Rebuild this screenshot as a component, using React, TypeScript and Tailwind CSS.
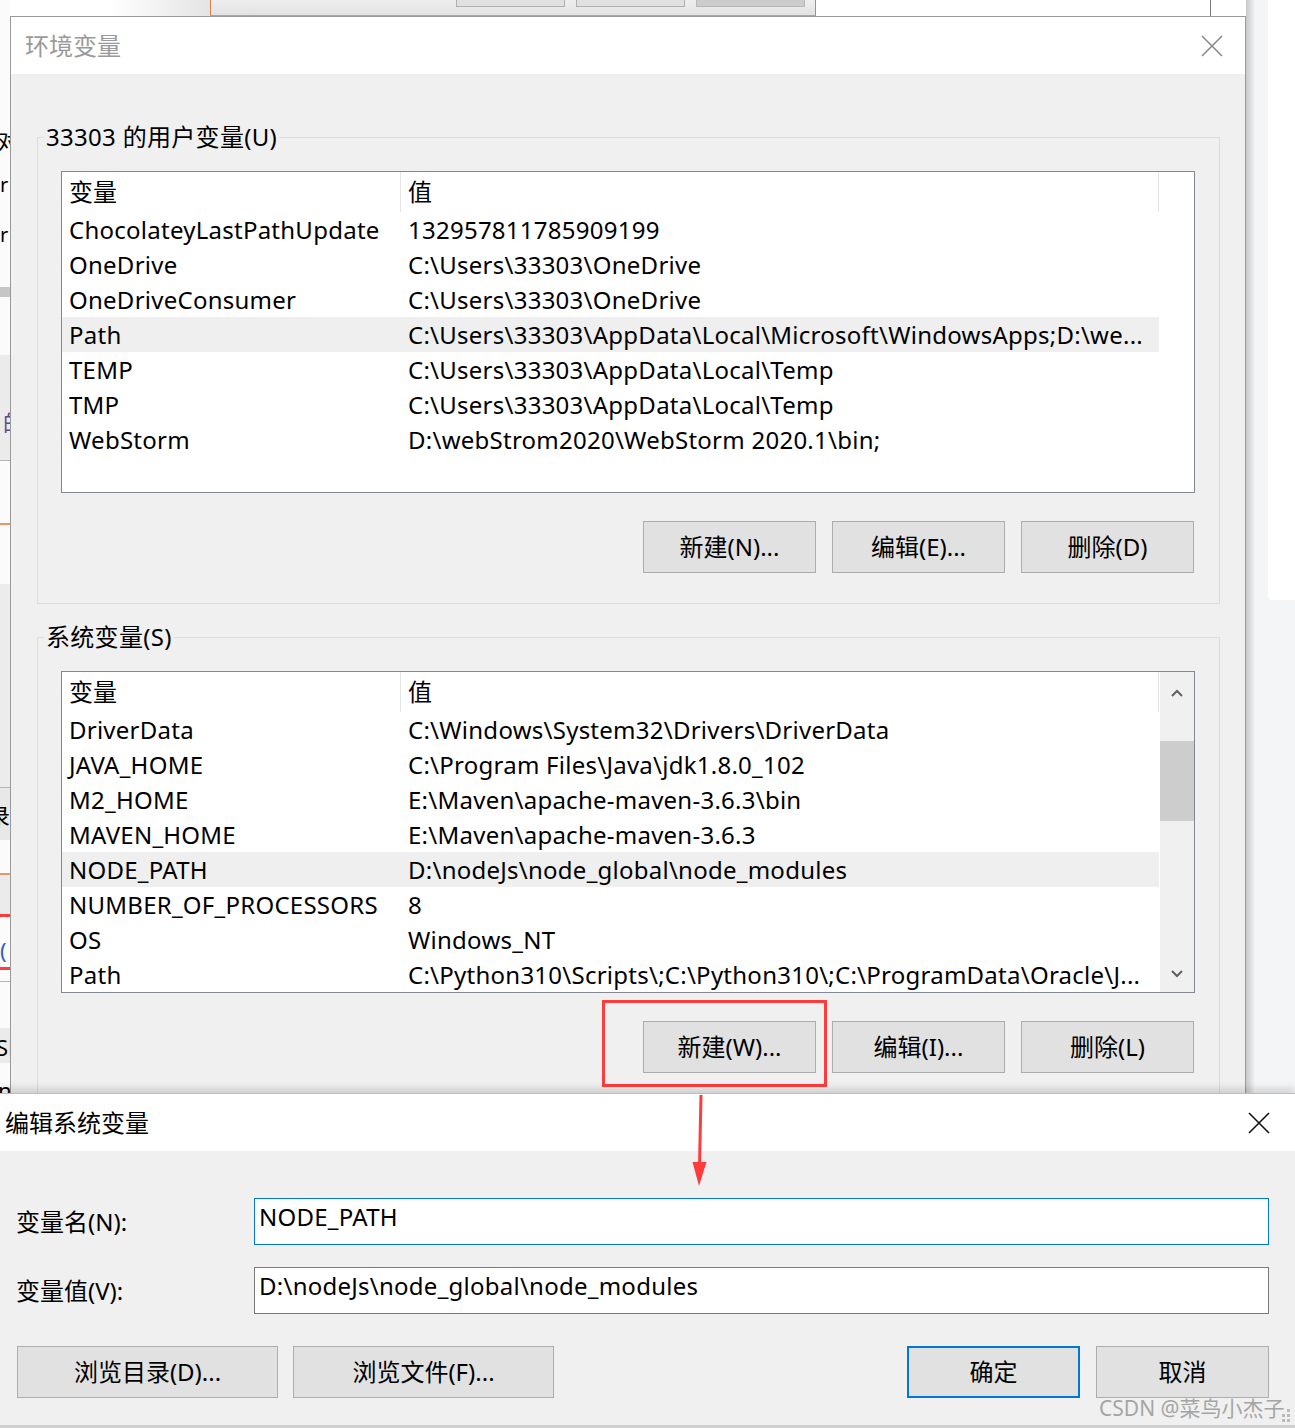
const FONT = "font-['Noto_Sans','Noto_Sans_CJK_SC',sans-serif]";

type Row = { name: string; value: string; active?: boolean };

const userVars: Row[] = [
  { name: "ChocolateyLastPathUpdate", value: "132957811785909199" },
  { name: "OneDrive", value: "C:\\Users\\33303\\OneDrive" },
  { name: "OneDriveConsumer", value: "C:\\Users\\33303\\OneDrive" },
  { name: "Path", value: "C:\\Users\\33303\\AppData\\Local\\Microsoft\\WindowsApps;D:\\we...", active: true },
  { name: "TEMP", value: "C:\\Users\\33303\\AppData\\Local\\Temp" },
  { name: "TMP", value: "C:\\Users\\33303\\AppData\\Local\\Temp" },
  { name: "WebStorm", value: "D:\\webStrom2020\\WebStorm 2020.1\\bin;" },
];

const sysVars: Row[] = [
  { name: "DriverData", value: "C:\\Windows\\System32\\Drivers\\DriverData" },
  { name: "JAVA_HOME", value: "C:\\Program Files\\Java\\jdk1.8.0_102" },
  { name: "M2_HOME", value: "E:\\Maven\\apache-maven-3.6.3\\bin" },
  { name: "MAVEN_HOME", value: "E:\\Maven\\apache-maven-3.6.3" },
  { name: "NODE_PATH", value: "D:\\nodeJs\\node_global\\node_modules", active: true },
  { name: "NUMBER_OF_PROCESSORS", value: "8" },
  { name: "OS", value: "Windows_NT" },
  { name: "Path", value: "C:\\Python310\\Scripts\\;C:\\Python310\\;C:\\ProgramData\\Oracle\\J..." },
];

// Close glyph of the title bars
const CloseIcon = ({ color }: { color: string }) => (
  <svg width="22" height="22" viewBox="0 0 22 22">
    <path d="M1 1 L21 21 M21 1 L1 21" stroke={color} strokeWidth="1.6" fill="none" />
  </svg>
);

const Chevron = ({ up }: { up?: boolean }) => (
  <svg width="12" height="8" viewBox="0 0 12 8">
    <path d={up ? "M1 7 L6 2 L11 7" : "M1 1 L6 6 L11 1"} stroke="#606060" strokeWidth="2" fill="none" />
  </svg>
);

const WinButton = ({ label, wide, primary }: { label: string; wide?: boolean; primary?: boolean }) => (
  <div
    className={`flex items-center justify-center h-[52px] bg-[#e1e1e1] text-[24px] text-black ${
      wide ? "w-[261px]" : "w-[173px]"
    } ${primary ? "border-2 border-[#0078d7]" : "border border-[#adadad]"}`}
  >
    {label}
  </div>
);

const VarList = ({ rows, scroll }: { rows: Row[]; scroll?: boolean }) => (
  <div className="flex h-[322px] w-[1134px] border border-[#828790] bg-white overflow-hidden">
    <div className="flex w-[1097px] flex-col">
      {/* header */}
      <div className="flex h-[40px] shrink-0 text-[24px] leading-[40px]">
        <div className="w-[339px] border-r border-[#e5e5e5] pl-[7px]">变量</div>
        <div className="flex-1 border-r border-[#e5e5e5] pl-[7px]">值</div>
      </div>
      {rows.map((r) => (
        <div
          key={r.name}
          className={`flex h-[35px] shrink-0 text-[24px] leading-[35px] tracking-[0.25px] whitespace-nowrap ${
            r.active ? "bg-[#efefef]" : ""
          }`}
        >
          <div className="w-[339px] pl-[7px]">{r.name}</div>
          <div className="flex-1 pl-[7px]">{r.value}</div>
        </div>
      ))}
    </div>
    <div className="flex w-[35px] pl-px">
      {scroll && (
        <div className="flex w-[34px] flex-col items-center bg-[#f0f0f0]">
          <div className="flex h-[40px] items-center justify-center pt-[2px]">
            <Chevron up />
          </div>
          <div className="mt-[29px] h-[80px] w-full bg-[#cdcdcd]" />
          <div className="flex-1" />
          <div className="flex h-[36px] items-center justify-center">
            <Chevron />
          </div>
        </div>
      )}
    </div>
  </div>
);

const Group = ({ title, rows, scroll, keys }: { title: string; rows: Row[]; scroll?: boolean; keys: string[] }) => (
  <fieldset className="border border-[#dcdcdc] p-0 m-0 min-w-0">
    <legend className="ml-[6px] px-[2px] text-[24px] leading-[32px] tracking-[0.3px]">{title}</legend>
    <div className="flex flex-col pl-[23px] pr-[24px] pt-[18px] pb-[30px]">
      <VarList rows={rows} scroll={scroll} />
      <div className="mt-[28px] flex justify-end gap-[16px] pr-px">
        <WinButton label={`新建(${keys[0]})...`} />
        <WinButton label={`编辑(${keys[1]})...`} />
        <WinButton label={`删除(${keys[2]})`} />
      </div>
    </div>
  </fieldset>
);

// strip of a window lying behind, at the left edge
const LeftStrip = () => (
  <div className="flex w-[10px] shrink-0 flex-col overflow-hidden bg-[#fbfbfb] text-[22px] leading-[30px]">
    <div className="h-[125px]" />
    <div className="-ml-[3px] h-[35px]">对</div>
    <div className="h-[50px] pt-[10px] text-[20px]">r</div>
    <div className="h-[50px] pt-[10px] text-[20px]">r</div>
    <div className="h-[27px]" />
    <div className="h-[10px] bg-[#c6c6c6]" />
    <div className="h-[58px]" />
    <div className="h-[105px] bg-[#ebebeb] pl-[3px] pt-[52px] text-[#5a4a8a]">的</div>
    <div className="h-px bg-[#b5b5b5]" />
    <div className="h-[62px]" />
    <div className="h-[2px] bg-[#e8956a]" />
    <div className="h-[59px]" />
    <div className="h-[203px] bg-[#ececec]" />
    <div className="h-px bg-[#b5b5b5]" />
    <div className="h-[52px] bg-[#e8e8e8] pt-[12px]">
      <div className="-ml-[12px]">录</div>
    </div>
    <div className="h-[33px]" />
    <div className="h-[2px] bg-[#e8956a]" />
    <div className="h-[39px] bg-[#ebebeb]" />
    <div className="h-[3px] bg-[#ff3b3b]" />
    <div className="h-[50px] pt-[18px] text-[#3060c0]">(</div>
    <div className="h-[3px] bg-[#ff3b3b]" />
    <div className="h-[11px]" />
    <div className="h-px bg-[#b5b5b5]" />
    <div className="h-[46px]" />
    <div className="h-[35px] bg-[#ebebeb] pt-[4px]">
      <div className="-ml-[4px]">SF</div>
    </div>
    <div className="h-[12px]" />
    <div className="-ml-[2px] h-[18px]">n</div>
  </div>
);

const RightStrip = () => (
  <div className="flex w-[49px] shrink-0">
    <div className="w-[9px] bg-gradient-to-r from-[#c8c8c8] to-[#f4f5f7]" />
    <div className="w-[13px] bg-[#f4f5f7]" />
    <div className="flex w-[27px] flex-col bg-[#f4f5f7]">
      <div className="h-[600px] rounded-bl-[4px] bg-white" />
    </div>
  </div>
);

const BackWindowStrip = () => (
  <div className="flex h-[16px] shrink-0">
    <div className="w-[200px] bg-gradient-to-r from-white via-white to-[#e4e4e4]" />
    <div className="flex w-[606px] border-x border-b border-x-[#e07a48] border-b-[#a8a8a8] bg-gradient-to-b from-[#efefef] to-[#e2e2e2] pl-[245px]">
      <div className="flex h-[7px] gap-[11px]">
        <div className="w-[109px] border border-t-0 border-[#b0b0b0] bg-[#e1e1e1]" />
        <div className="w-[109px] border border-t-0 border-[#b0b0b0] bg-[#e1e1e1]" />
        <div className="w-[109px] border border-t-0 border-[#b8b8b8] bg-[#cccccc]" />
      </div>
    </div>
    <div className="flex flex-1 bg-white pl-[394px]">
      <div className="w-px bg-[#7a7a7a]" />
    </div>
  </div>
);

export default function App() {
  return (
    <div className={`relative flex h-[1428px] w-[1295px] flex-col overflow-hidden bg-white text-black ${FONT}`}>
      <div className="flex h-[1093px] shrink-0">
        <LeftStrip />
        <div className="flex w-[1236px] shrink-0 flex-col">
          <BackWindowStrip />
          {/* 环境变量 dialog */}
          <div className="flex flex-1 flex-col overflow-hidden border-l border-r border-t border-[#9a9a9a]">
            <div className="flex h-[57px] shrink-0 items-center justify-between bg-white pl-[14px] pr-[22px]">
              <span className="text-[24px] text-[#9a9a9a]">环境变量</span>
              <CloseIcon color="#8a8a8a" />
            </div>
            <div className="flex flex-1 flex-col bg-[#f0f0f0] pl-[26px] pr-[25px] pt-[47px]">
              <Group title="33303 的用户变量(U)" rows={userVars} keys={["N", "E", "D"]} />
              <div className="h-[17px] shrink-0" />
              <Group title="系统变量(S)" rows={sysVars} scroll keys={["W", "I", "L"]} />
            </div>
          </div>
        </div>
        <RightStrip />
      </div>

      {/* 编辑系统变量 dialog */}
      <div className="relative z-10 flex flex-1 flex-col border-t border-[#bdbdbd] shadow-[0_-5px_7px_rgba(0,0,0,0.13)]">
        <div className="flex h-[57px] shrink-0 items-center justify-between bg-white pl-[5px] pr-[25px]">
          <span className="text-[24px]">编辑系统变量</span>
          <CloseIcon color="#111111" />
        </div>
        <div className="flex flex-1 flex-col bg-[#f0f0f0] pt-[47px]">
          <div className="flex items-center pl-[16px]">
            <div className="w-[238px] text-[24px]">变量名(N):</div>
            <div className="h-[47px] w-[1015px] border border-[#0078d7] bg-white pl-[4px] pt-[2px] text-[24px] leading-[32px] tracking-[0.25px]">
              NODE_PATH
            </div>
          </div>
          <div className="mt-[22px] flex items-center pl-[16px]">
            <div className="w-[238px] text-[24px]">变量值(V):</div>
            <div className="h-[47px] w-[1015px] border border-[#7a7a7a] bg-white pl-[4px] pt-[2px] text-[24px] leading-[32px] tracking-[0.25px]">
              D:\nodeJs\node_global\node_modules
            </div>
          </div>
          <div className="mt-[32px] flex justify-between pl-[17px] pr-[26px]">
            <div className="flex gap-[15px]">
              <WinButton label="浏览目录(D)..." wide />
              <WinButton label="浏览文件(F)..." wide />
            </div>
            <div className="flex gap-[16px]">
              <WinButton label="确定" primary />
              <WinButton label="取消" />
            </div>
          </div>
          <div className="flex-1" />
          <div className="h-[3px] bg-[#d0d0d0]" />
        </div>
      </div>

      {/* annotations */}
      <div className="absolute left-[602px] top-[1000px] h-[87px] w-[225px] border-[3px] border-[#ff3c3c]" />
      <svg className="absolute left-[688px] top-[1094px] z-20" width="24" height="94" viewBox="0 0 24 94">
        <path d="M13 1 L11.5 72" stroke="#ff3c3c" strokeWidth="3" fill="none" />
        <path d="M4.5 68 L11 92 L18.5 68 Z" fill="#ff3c3c" />
      </svg>
      <div className="absolute left-[1099px] top-[1394px] z-20 text-[21px] leading-[28px] text-[#a5a5a5]">
        CSDN @菜鸟小杰子
      </div>
      <svg className="absolute left-[1280px] top-[1408px] z-20" width="12" height="16" viewBox="0 0 12 16">
        <rect x="7" y="1" width="3" height="3" fill="#bbbbbb" />
        <rect x="7" y="6" width="3" height="3" fill="#bbbbbb" />
        <rect x="2" y="6" width="3" height="3" fill="#bbbbbb" />
        <rect x="7" y="11" width="3" height="3" fill="#bbbbbb" />
        <rect x="2" y="11" width="3" height="3" fill="#bbbbbb" />
      </svg>
    </div>
  );
}
